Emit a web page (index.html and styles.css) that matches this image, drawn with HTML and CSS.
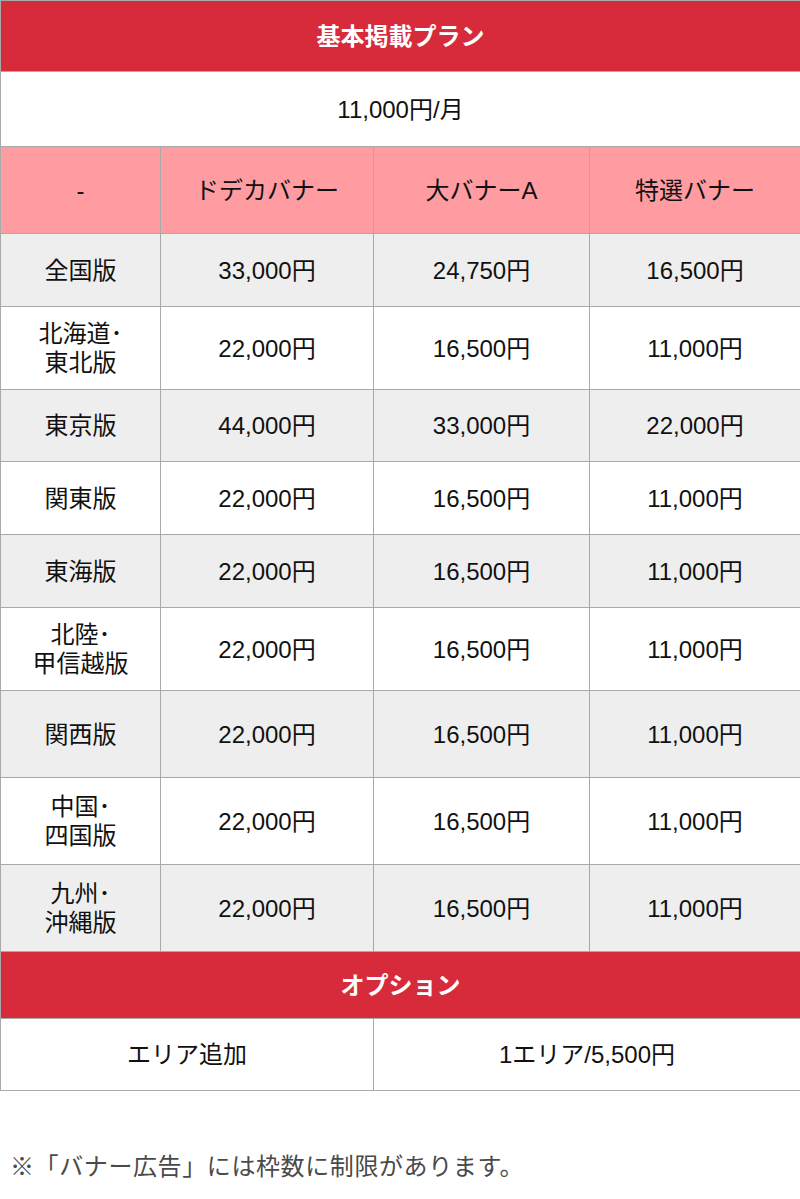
FILE: index.html
```html
<!DOCTYPE html>
<html lang="ja">
<head>
<meta charset="utf-8">
<title>基本掲載プラン</title>
<link rel="stylesheet" href="styles.css">
</head>
<body>
<div class="plan">
  <div class="cell full title">基本掲載プラン</div>
  <div class="cell full">11,000円/月</div>

  <div class="cell head">-</div>
  <div class="cell head">ドデカバナー</div>
  <div class="cell head">大バナーA</div>
  <div class="cell head">特選バナー</div>

  <div class="cell gray">全国版</div>
  <div class="cell gray">33,000円</div>
  <div class="cell gray">24,750円</div>
  <div class="cell gray">16,500円</div>

  <div class="cell">北海道･<br>東北版</div>
  <div class="cell">22,000円</div>
  <div class="cell">16,500円</div>
  <div class="cell">11,000円</div>

  <div class="cell gray">東京版</div>
  <div class="cell gray">44,000円</div>
  <div class="cell gray">33,000円</div>
  <div class="cell gray">22,000円</div>

  <div class="cell">関東版</div>
  <div class="cell">22,000円</div>
  <div class="cell">16,500円</div>
  <div class="cell">11,000円</div>

  <div class="cell gray">東海版</div>
  <div class="cell gray">22,000円</div>
  <div class="cell gray">16,500円</div>
  <div class="cell gray">11,000円</div>

  <div class="cell">北陸･<br>甲信越版</div>
  <div class="cell">22,000円</div>
  <div class="cell">16,500円</div>
  <div class="cell">11,000円</div>

  <div class="cell gray">関西版</div>
  <div class="cell gray">22,000円</div>
  <div class="cell gray">16,500円</div>
  <div class="cell gray">11,000円</div>

  <div class="cell">中国･<br>四国版</div>
  <div class="cell">22,000円</div>
  <div class="cell">16,500円</div>
  <div class="cell">11,000円</div>

  <div class="cell gray">九州･<br>沖縄版</div>
  <div class="cell gray">22,000円</div>
  <div class="cell gray">16,500円</div>
  <div class="cell gray">11,000円</div>

  <div class="cell full title">オプション</div>
  <div class="cell half">エリア追加</div>
  <div class="cell half">1エリア/5,500円</div>
</div>
<p class="note">※「バナー広告」には枠数に制限があります。</p>
</body>
</html>
```

FILE: styles.css
```css
html, body {
  margin: 0;
  padding: 0;
  background: #ffffff;
}

body {
  font-family: "Liberation Sans", "Noto Sans CJK JP", sans-serif;
  color: #111111;
}

.plan {
  display: grid;
  grid-template-columns: 159px 212px 215px 210px;
  grid-template-rows: 70px 74px 86px 72px 82px 71px 72px 72px 82px 86px 86px 86px 66px 71px;
  gap: 1px;
  width: 799px;
  background: #a9a9a9;
  border-top: 1px solid #a9a9a9;
  border-left: 1px solid #a9a9a9;
  border-bottom: 1px solid #a9a9a9;
}

.cell {
  display: flex;
  align-items: center;
  justify-content: center;
  text-align: center;
  background: #ffffff;
  font-size: 24px;
  line-height: 29px;
}

.full {
  grid-column: 1 / -1;
}

.half {
  grid-column: span 2;
}

.title {
  background: #d72b3b;
  color: #ffffff;
  font-weight: bold;
}

.head {
  background: #ff9ca2;
}

.gray {
  background: #eeeeee;
}

.note {
  margin: 58px 0 0 10px;
  font-family: "Noto Sans CJK JP", sans-serif;
  font-size: 24px;
  letter-spacing: 0.6px;
  line-height: 32px;
  color: #4a4a4a;
}
```
